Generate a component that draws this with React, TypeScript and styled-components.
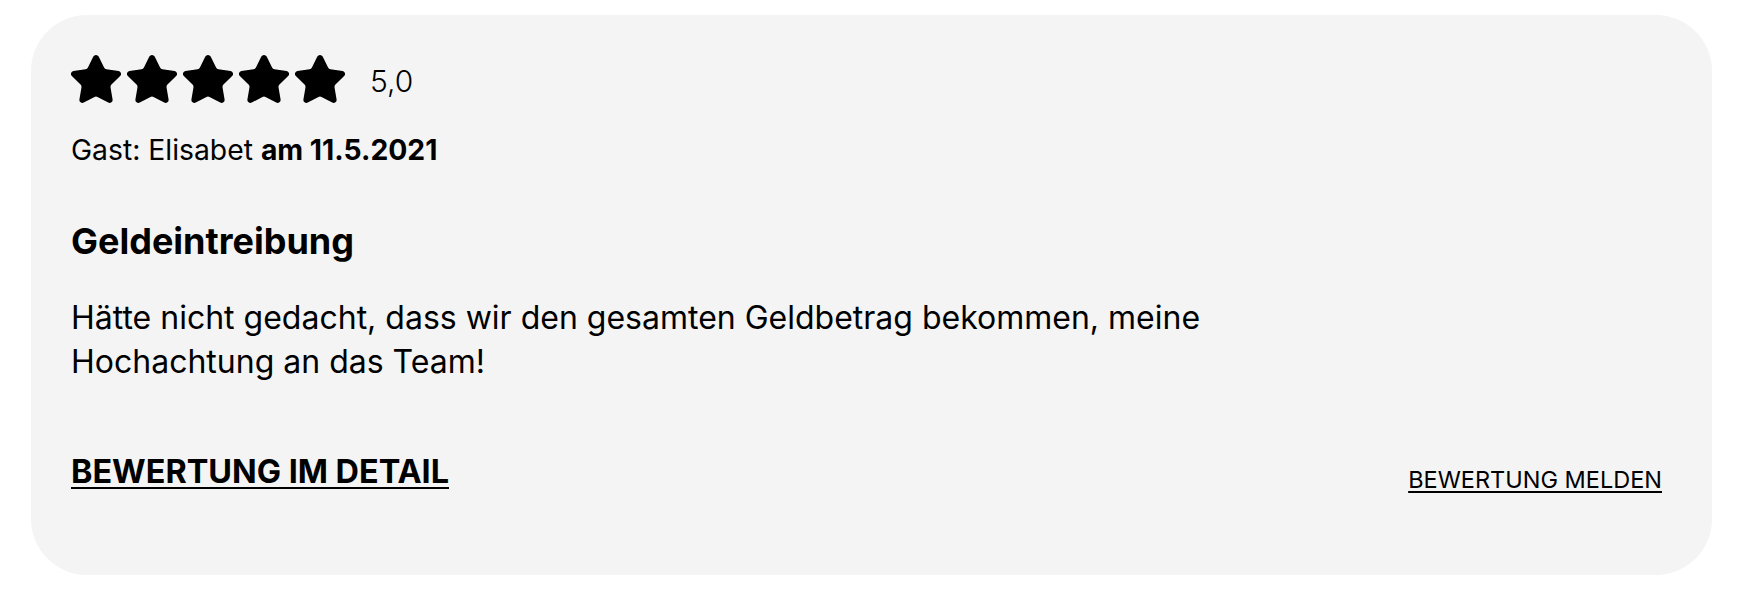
import React from "react";
import styled, { createGlobalStyle } from "styled-components";

const GlobalStyle = createGlobalStyle`
  html, body {
    margin: 0;
    padding: 0;
    background: #ffffff;
  }
  body {
    font-family: "Inter", "Noto Sans", sans-serif;
    color: #000000;
  }
`;

const Page = styled.div`
  padding: 15px 26px 17px 31px;
`;

const Card = styled.article`
  box-sizing: border-box;
  width: 1681px;
  height: 560px;
  display: flex;
  flex-direction: column;
  padding: 37px 50px 0 40px;
  background-color: #f4f4f4;
  border-radius: 56px;
`;

const RatingRow = styled.div`
  display: flex;
  align-items: center;
  margin-left: -3px;
`;

const Stars = styled.div`
  display: flex;
`;

const Score = styled.span`
  margin-left: 22px;
  margin-top: 2px;
  font-size: 30px;
  font-weight: 300;
  line-height: 1;
`;

const Meta = styled.p`
  margin: 23px 0 0;
  font-size: 28.3px;
  line-height: 39px;

  strong {
    font-weight: 700;
  }
`;

const Title = styled.h2`
  margin: 51px 0 0;
  font-size: 36px;
  font-weight: 700;
  line-height: 41px;
`;

const Body = styled.p`
  max-width: 1180px;
  margin: 34px 0 0;
  font-size: 32px;
  line-height: 44px;
`;

const Footer = styled.div`
  display: flex;
  justify-content: space-between;
  align-items: flex-start;
  margin-top: 69px;
`;

const Link = styled.a<{ $strong?: boolean }>`
  color: #000000;
  text-decoration: underline;
  text-transform: uppercase;
  font-size: ${(p) => (p.$strong ? "32.4px" : "23.5px")};
  font-weight: ${(p) => (p.$strong ? 700 : 400)};
  line-height: ${(p) => (p.$strong ? "38px" : "28px")};
  margin-top: ${(p) => (p.$strong ? "0" : "13px")};
  text-decoration-thickness: 2px;
  text-underline-offset: ${(p) => (p.$strong ? "4px" : "3px")};
  cursor: pointer;
`;

const Star = () => (
  <svg width="56" height="56" viewBox="0 0 24 24" fill="#000" stroke="#000" strokeWidth="1.5" strokeLinejoin="round">
    <path d="M11.525 2.295a.53.53 0 0 1 .95 0l2.31 4.679a2.123 2.123 0 0 0 1.595 1.16l5.166.756a.53.53 0 0 1 .294.904l-3.736 3.638a2.123 2.123 0 0 0-.611 1.878l.882 5.14a.53.53 0 0 1-.771.56l-4.618-2.428a2.122 2.122 0 0 0-1.973 0L6.396 21.01a.53.53 0 0 1-.77-.56l.881-5.139a2.122 2.122 0 0 0-.611-1.879L2.16 9.795a.53.53 0 0 1 .294-.906l5.165-.755a2.122 2.122 0 0 0 1.597-1.16z" />
  </svg>
);

export default function App() {
  return (
    <Page>
      <GlobalStyle />
      <Card>
        <RatingRow>
          <Stars>
            {[0, 1, 2, 3, 4].map((i) => (
              <Star key={i} />
            ))}
          </Stars>
          <Score>5,0</Score>
        </RatingRow>
        <Meta>
          Gast: Elisabet <strong>am 11.5.2021</strong>
        </Meta>
        <Title>Geldeintreibung</Title>
        <Body>
          Hätte nicht gedacht, dass wir den gesamten Geldbetrag bekommen, meine Hochachtung an das Team!
        </Body>
        <Footer>
          <Link $strong>Bewertung im Detail</Link>
          <Link>Bewertung melden</Link>
        </Footer>
      </Card>
    </Page>
  );
}
